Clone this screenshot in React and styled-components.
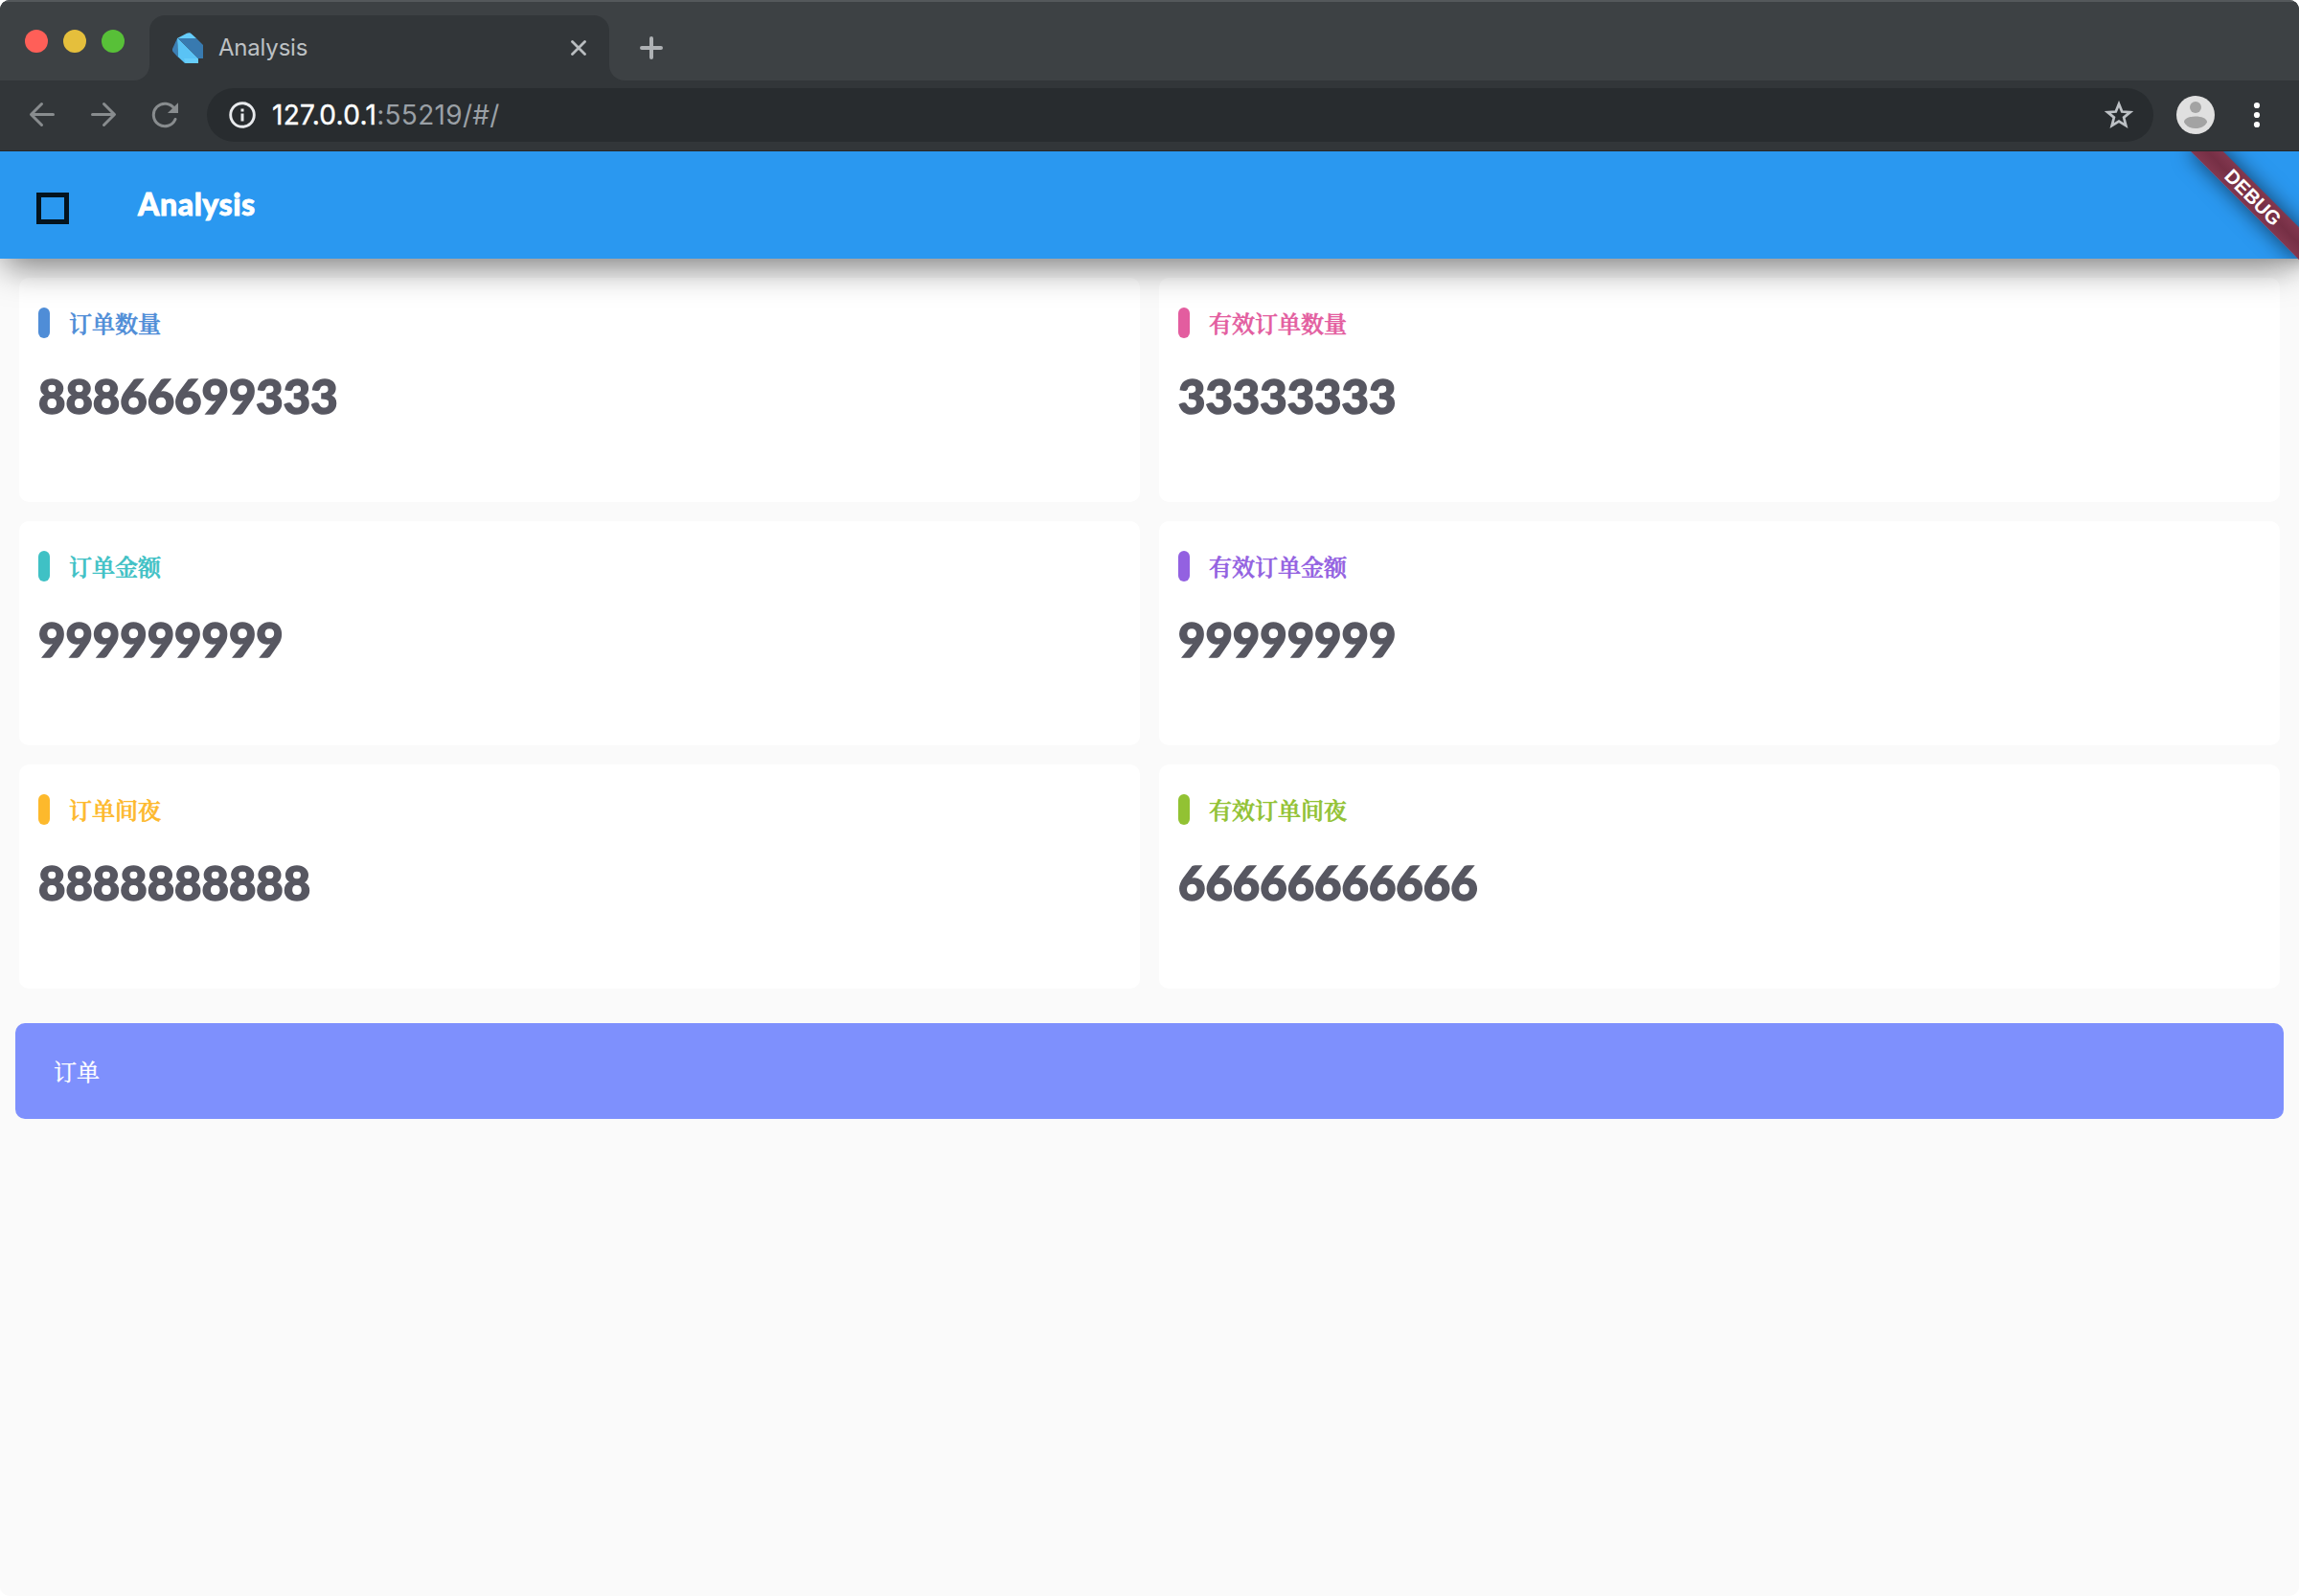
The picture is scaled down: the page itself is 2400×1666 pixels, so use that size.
import React from "react";
import styled, { createGlobalStyle } from "styled-components";

const Global = createGlobalStyle`
  html, body { margin: 0; padding: 0; background: #fff; }
  * { box-sizing: border-box; }
`;

const Window = styled.div`
  width: 2400px;
  height: 1666px;
  display: flex;
  flex-direction: column;
  overflow: hidden;
  border-radius: 10px;
  background: #fafafa;
  font-family: Inter, Roboto, sans-serif;
`;

const TabStrip = styled.div`
  height: 84px;
  flex: none;
  display: flex;
  align-items: flex-end;
  background: #3d4144;
  border-top: 2px solid #54585b;
`;

const Lights = styled.div`
  width: 156px;
  height: 82px;
  padding: 29px 0 0 26px;
  display: flex;
  gap: 16px;
  background: #3d4144;
  border-bottom-right-radius: 16px;
`;

const Light = styled.span`
  width: 24px;
  height: 24px;
  border-radius: 50%;
  background: ${(p) => p.$color};
`;

const TabBase = styled.div`
  height: 82px;
  flex: ${(p) => (p.$fill ? "1" : "none")};
  display: flex;
  align-items: flex-end;
  background: #323639;
`;

const Tab = styled.div`
  width: 480px;
  height: 82px;
  padding: 14px 0 0;
  background: #3d4144;
`;

const TabFace = styled.div`
  height: 68px;
  display: flex;
  align-items: center;
  padding: 0 24px;
  background: #323639;
  border-radius: 16px 16px 0 0;
`;

const TabTitle = styled.span`
  flex: 1;
  margin-left: 16px;
  font-size: 24px;
  line-height: 32px;
  letter-spacing: -0.2px;
  color: #bdc1c4;
`;

const StripEnd = styled.div`
  flex: 1;
  height: 82px;
  display: flex;
  align-items: center;
  padding: 14px 0 0 32px;
  background: #3d4144;
  border-bottom-left-radius: 16px;
`;

const Toolbar = styled.div`
  height: 74px;
  flex: none;
  display: flex;
  align-items: center;
  padding: 0 32px 1px 30px;
  background: #323639;
  border-bottom: 1px solid #26292b;
`;

const NavIcons = styled.div`
  width: 186px;
  display: flex;
  gap: 36px;
`;

const AddressBar = styled.div`
  width: 2032px;
  height: 56px;
  display: flex;
  align-items: center;
  padding: 0 21px 0 23px;
  border-radius: 28px;
  background: #282c2f;
`;

const Url = styled.div`
  flex: 1;
  margin-left: 17px;
  font-size: 28px;
  line-height: 36px;
  letter-spacing: 0.3px;
  white-space: pre;
  color: #9aa0a6;
`;

const Host = styled.span`
  color: #fff;
  -webkit-text-stroke: 0.4px #fff;
`;

const ToolbarEnd = styled.div`
  flex: 1;
  display: flex;
  align-items: center;
  justify-content: space-between;
  padding: 0 7px 0 24px;
`;

const Page = styled.main`
  position: relative;
  flex: 1;
  overflow: hidden;
  display: flex;
  flex-direction: column;
  background: #fafafa;
`;

const AppBar = styled.header`
  position: relative;
  z-index: 1;
  height: 112px;
  flex: none;
  display: flex;
  align-items: center;
  padding-left: 38px;

  &::before {
    content: "";
    position: absolute;
    z-index: -1;
    inset: 0;
    background: #2a98f0;
    box-shadow: 0 12px 36px -4px rgba(0, 0, 0, 0.52);
  }
`;

const MenuGlyph = styled.span`
  width: 34px;
  height: 33px;
  margin-top: 7px;
  border: 5px solid #04141f;
`;

const Title = styled.h1`
  margin: -3px 0 0 72px;
  font: 900 32px/40px Lato, sans-serif;
  letter-spacing: 0.55px;
  color: #fff;
  -webkit-text-stroke: 0.8px #fff;
`;

const Banner = styled.div`
  position: absolute;
  z-index: 2;
  top: 56px;
  right: -80px;
  width: 160px;
  height: 24px;
  transform-origin: 80px -56px;
  transform: rotate(45deg);
  background: linear-gradient(#82384f, #762f45 50%, #82384f);
  box-shadow: 0 0 22px rgba(0, 0, 0, 0.6);
  color: #fff;
  text-align: center;
  font: 900 20.4px/25px "Liberation Sans", Arial, sans-serif;
`;

const Grid = styled.section`
  display: grid;
  grid-template-columns: 1fr 1fr;
  grid-auto-rows: 234px;
  gap: 20px;
  padding: 20px 20px 0;
`;

const Card = styled.article`
  padding: 31px 20px 0;
  border-radius: 10px;
  background: #fff;
`;

const CardHead = styled.div`
  height: 32px;
  display: flex;
  align-items: center;
  gap: 20px;
  color: ${(p) => p.$color};
`;

const Marker = styled.span`
  width: 12px;
  height: 32px;
  border-radius: 6px;
  background: currentColor;
`;

const Label = styled.span`
  font: 500 24px/32px "Noto Serif CJK SC", "Noto Sans CJK SC", serif;
  -webkit-text-stroke: 0.7px currentColor;
`;

const Value = styled.div`
  margin-top: 30px;
  font: 900 49px/60px Lato, sans-serif;
  color: #575761;
  -webkit-text-stroke: 1.5px #575761;
`;

const OrderBar = styled.section`
  height: 100px;
  margin: 36px 16px 0;
  padding: 0 40px;
  display: flex;
  align-items: center;
  border-radius: 10px;
  background: #7e90fd;
  color: #fff;
  font: 400 24px/32px "Noto Serif CJK SC", "Noto Sans CJK SC", serif;
  -webkit-text-stroke: 0.35px #fff;
`;

const stats = [
  ["订单数量", "88866699333", "#4f8dd7"],
  ["有效订单数量", "33333333", "#e35d9f"],
  ["订单金额", "999999999", "#3fc1c5"],
  ["有效订单金额", "99999999", "#9361e1"],
  ["订单间夜", "8888888888", "#fdb92c"],
  ["有效订单间夜", "66666666666", "#92c233"],
];

const DartLogo = () => (
  <svg width="32" height="32" viewBox="0 0 32 32">
    <path d="M5 6 15 .8q3-1.400 5 .6L25 6z" fill="#66cdfb" />
    <path d="M5 6 0 17q-.4 2 1 3.500L6 26z" fill="#3c7fb5" />
    <path d="M5 6h1l21 21v5H13L6 25.500z" fill="#5ac3f5" />
    <path d="M6 6h19l7 7v14h-5z" fill="#387ab0" />
    <path d="M12 27h15v5H14z" fill="#66cdfb" />
  </svg>
);

const Stroke = ({ d, size = 28, color = "#888c8e", width = 3 }) => (
  <svg width={size} height={size} viewBox={`0 0 ${size} ${size}`} fill="none" stroke={color} strokeWidth={width} strokeLinecap="round" strokeLinejoin="round">
    <path d={d} />
  </svg>
);

export default function App() {
  return (
    <Window>
      <Global />
      <TabStrip>
        <TabBase>
          <Lights>
            <Light $color="#ff5f58" />
            <Light $color="#e5bf3c" />
            <Light $color="#58c038" />
          </Lights>
        </TabBase>
        <Tab>
          <TabFace>
            <DartLogo />
            <TabTitle>Analysis</TabTitle>
            <Stroke size={16} color="#b9bdc0" width={2.8} d="M1.500 1.500l13 13M14.500 1.500l-13 13" />
          </TabFace>
        </Tab>
        <TabBase $fill>
          <StripEnd>
            <Stroke size={24} color="#aeb1b4" width={4} d="M12 2v20M2 12h20" />
          </StripEnd>
        </TabBase>
      </TabStrip>
      <Toolbar>
        <NavIcons>
          <Stroke d="M25.500 13.500H3M13.500 2.500 2.500 13.500 13.500 24.500" />
          <Stroke d="M2.500 13.500h22.500M14.500 2.500 25.500 13.500 14.500 24.500" />
          <svg width="28" height="28" viewBox="0 0 28 28">
            <path d="M24 7.500A11.800 11.800 0 1 0 25 18.500" fill="none" stroke="#888c8e" strokeWidth="3" strokeLinecap="round" />
            <path d="M28.200 1v11H17z" fill="#888c8e" />
          </svg>
        </NavIcons>
        <AddressBar>
          <svg width="28" height="28" viewBox="0 0 28 28">
            <circle cx="14" cy="14" r="12.300" fill="none" stroke="#e8eaed" strokeWidth="2.900" />
            <path d="M12.500 7.500h3v3h-3zM12.500 12.500h3v8h-3z" fill="#e8eaed" />
          </svg>
          <Url><Host>127.0.0.1</Host>:55219/#/</Url>
          <svg width="30" height="30" viewBox="0 0 30 30">
            <path d="M15 3.500l3.200 8 8.600.6-6.700 5.500 2.200 8.500L15 21.500l-7.300 4.600 2.200-8.500-6.700-5.500 8.600-.6z" fill="none" stroke="#bdc1c5" strokeWidth="2.700" />
          </svg>
        </AddressBar>
        <ToolbarEnd>
          <svg width="40" height="40" viewBox="0 0 40 40">
            <circle cx="20" cy="20" r="20" fill="#e0e0e0" />
            <circle cx="20" cy="12" r="6" fill="#a3a3a3" />
            <path d="M8 27.500c0-4 6-6 12-6s12 2 12 6c-2 4-6 6.500-12 6.500s-10-2.500-12-6.500z" fill="#a3a3a3" />
          </svg>
          <svg width="10" height="28" viewBox="0 0 10 28" fill="#fff">
            <circle cx="5" cy="4" r="3.100" />
            <circle cx="5" cy="14" r="3.100" />
            <circle cx="5" cy="24" r="3.100" />
          </svg>
        </ToolbarEnd>
      </Toolbar>
      <Page>
        <AppBar>
          <MenuGlyph />
          <Title>Analysis</Title>
        </AppBar>
        <Banner>DEBUG</Banner>
        <Grid>
          {stats.map(([label, value, color]) => (
            <Card key={label}>
              <CardHead $color={color}>
                <Marker />
                <Label>{label}</Label>
              </CardHead>
              <Value>{value}</Value>
            </Card>
          ))}
        </Grid>
        <OrderBar>订单</OrderBar>
      </Page>
    </Window>
  );
}
